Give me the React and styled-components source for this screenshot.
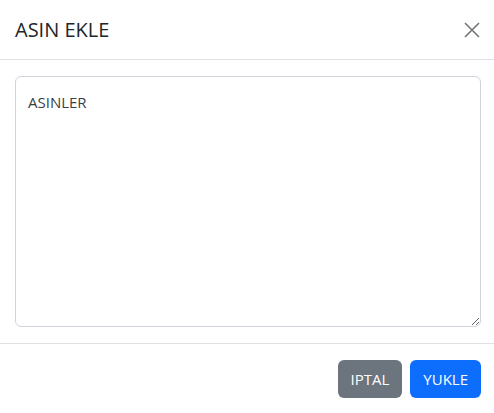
import React from 'react';
import styled, { createGlobalStyle } from 'styled-components';

const GlobalStyle = createGlobalStyle`
  html, body {
    margin: 0;
    padding: 0;
    background: #fff;
  }
  body {
    font-family: 'Open Sans', 'Noto Sans', sans-serif;
    color: #212529;
  }
  * { box-sizing: border-box; }
`;

function App() {
  return (
    <>
      <GlobalStyle />
      <Modal>
        <Header>
          <Title>ASIN EKLE</Title>
          <CloseBtn aria-label="close">
            <svg width="16" height="16" viewBox="0 0 16 16">
              <path d="M1 1 L15 15 M15 1 L1 15" stroke="#757575" strokeWidth="1.6" fill="none" />
            </svg>
          </CloseBtn>
        </Header>
        <Body>
          <TextArea placeholder="ASINLER" />
        </Body>
        <Footer>
          <Button variant="secondary">IPTAL</Button>
          <Button variant="primary">YUKLE</Button>
        </Footer>
      </Modal>
    </>
  );
}

export default App;

const Modal = styled.div`
  width: 494px;
  height: 413px;
  display: flex;
  flex-direction: column;
  background: #fff;
`;
const Header = styled.div`
  display: flex;
  align-items: center;
  justify-content: space-between;
  height: 60px;
  padding: 0 13px 0 15px;
  border-bottom: 1px solid #dee2e6;
`;
const Title = styled.h5`
  margin: 0;
  font-size: 20px;
  font-weight: 500;
  line-height: 1.2;
  color: #212529;
`;
const CloseBtn = styled.button`
  display: flex;
  align-items: center;
  justify-content: center;
  width: 18px;
  height: 18px;
  padding: 0;
  border: none;
  background: transparent;
  cursor: pointer;
`;
const Body = styled.div`
  padding: 16px 13px 16px 15px;
  height: 283px;
`;
const TextArea = styled.textarea`
  display: block;
  width: 100%;
  height: 100%;
  padding: 14px 12px;
  border: 1px solid #ced4da;
  border-radius: 6px;
  font-family: inherit;
  font-size: 15px;
  line-height: 1.5;
  color: #212529;
  resize: vertical;
  outline: none;
  &::placeholder {
    color: #3a3f44;
    opacity: 1;
  }
`;
const Footer = styled.div`
  display: flex;
  justify-content: flex-end;
  align-items: center;
  gap: 8px;
  padding: 16px 13px 0 0;
  border-top: 1px solid #dee2e6;
`;
const Button = styled.button`
  height: 38px;
  padding: 0 13px;
  border: none;
  border-radius: 6px;
  font-family: inherit;
  font-size: 15px;
  font-weight: 500;
  color: #fff;
  background: ${(p) => (p.variant === 'primary' ? '#0d6efd' : '#6c757d')};
  cursor: pointer;
`;
